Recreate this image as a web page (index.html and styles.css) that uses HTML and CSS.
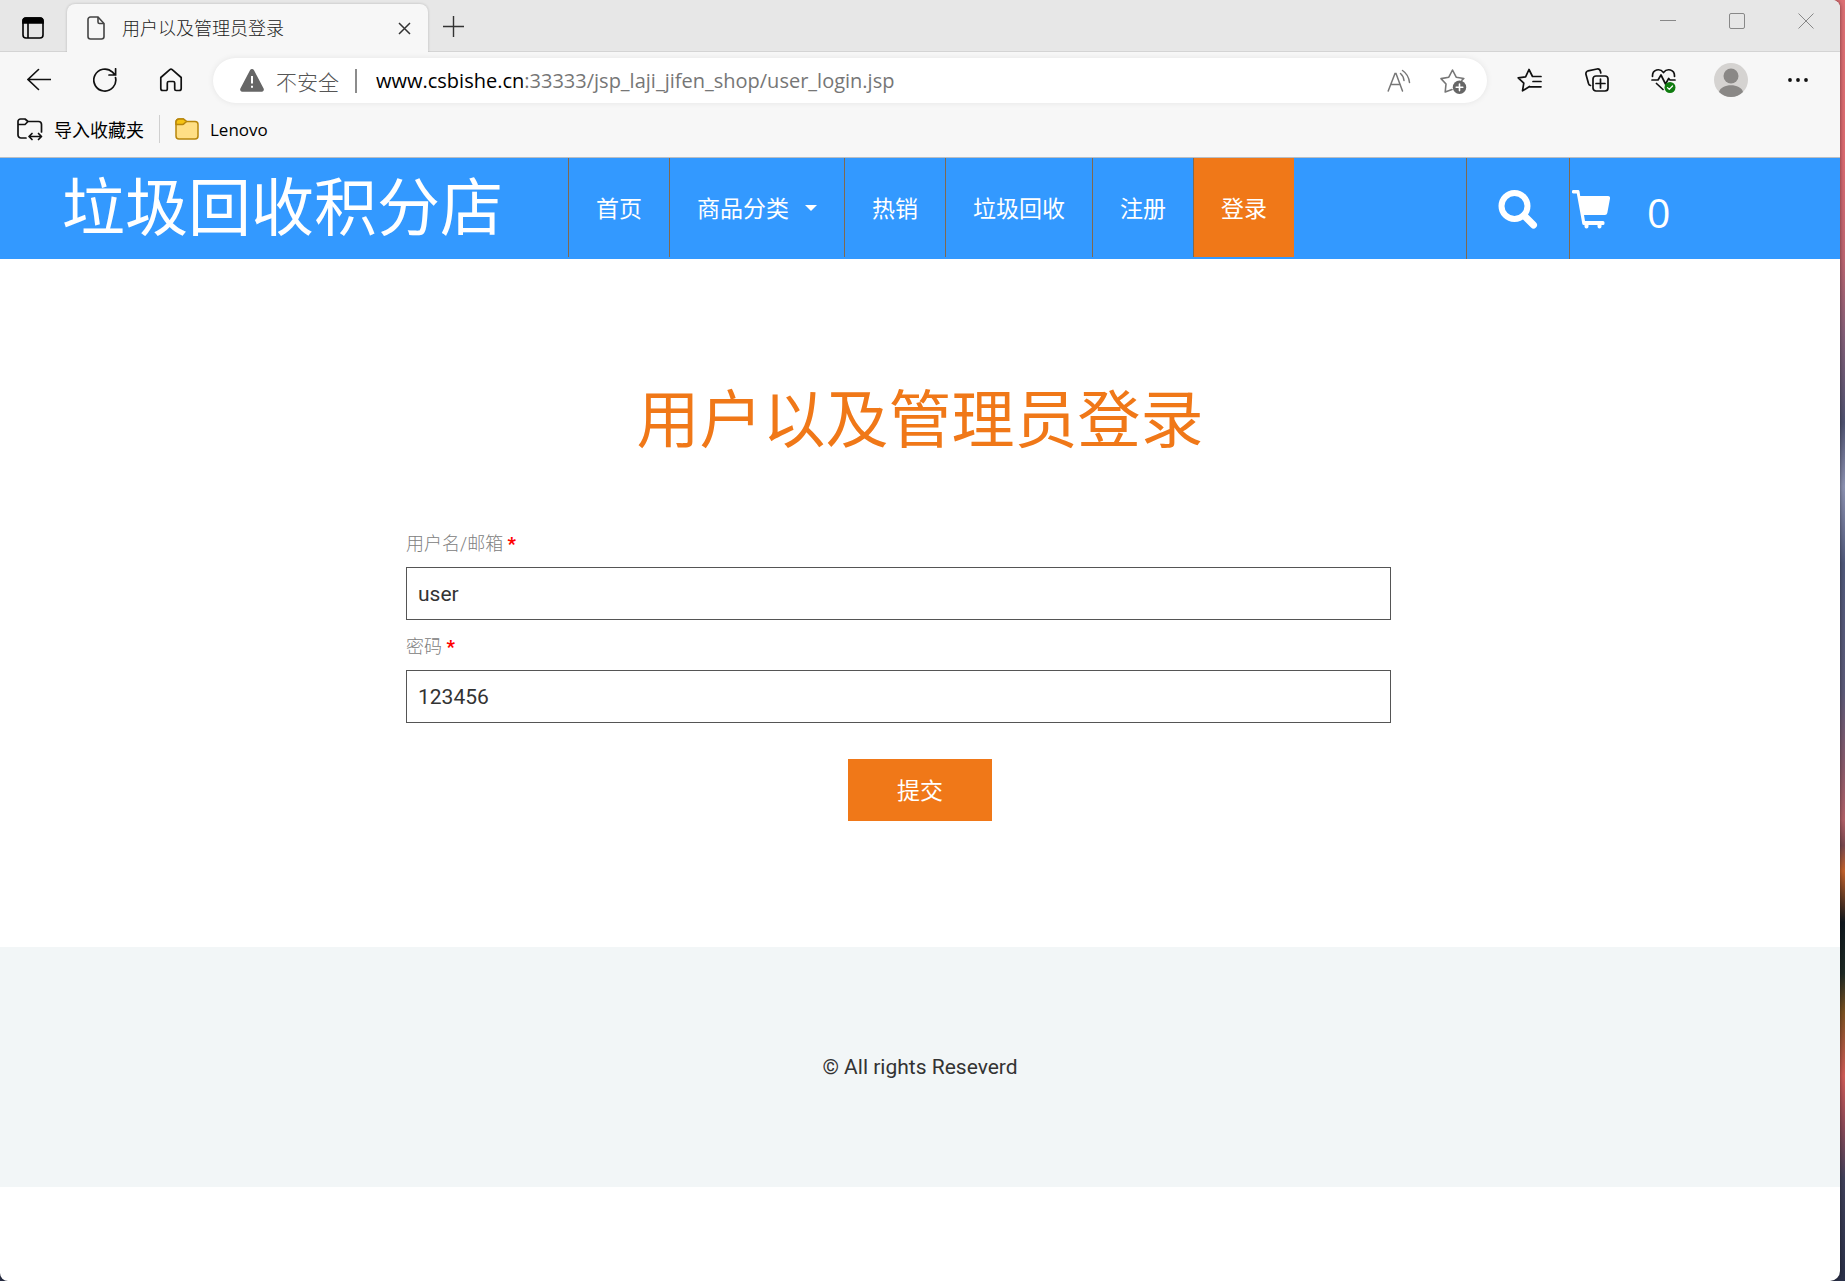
FILE: index.html
```html
<!DOCTYPE html>
<html lang="zh-CN">
<head>
    <meta charset="UTF-8">
    <meta name="viewport" content="width=device-width, initial-scale=1.0">
    <title>用户以及管理员登录</title>
    <link rel="stylesheet" href="styles.css">
</head>
<body>
<div class="window">

    <!-- Tab strip -->
    <div class="titlebar">
        <button class="tab-actions" aria-label="Tab actions">
            <svg width="22" height="22" viewBox="0 0 22 22" fill="none" stroke="#000" stroke-width="1.6">
                <rect x="1" y="1" width="20" height="20" rx="3"/>
                <path d="M1 6V4a3 3 0 0 1 3-3h14a3 3 0 0 1 3 3v2z" fill="#000"/>
                <path d="M6 6v15"/>
            </svg>
        </button>
        <div class="tab">
            <svg width="18" height="24" viewBox="0 0 18 24" fill="none" stroke="#444" stroke-width="1.6">
                <path d="M3.500 1H11l6 6.500V20.500a2.500 2.500 0 0 1-2.500 2.500h-11A2.500 2.500 0 0 1 1 20.500v-17A2.500 2.500 0 0 1 3.500 1z"/>
                <path d="M11 1v5a1.500 1.500 0 0 0 1.500 1.500H17"/>
            </svg>
            <span class="tab-title">用户以及管理员登录</span>
            <button class="tab-close" aria-label="Close tab">
                <svg width="13" height="13" viewBox="0 0 13 13" stroke="#333" stroke-width="1.5"><path d="M1 1l11 11M12 1L1 12"/></svg>
            </button>
        </div>
        <button class="new-tab" aria-label="New tab">
            <svg width="21" height="21" viewBox="0 0 21 21" stroke="#333" stroke-width="1.4"><path d="M10.500 0v21M0 10.500h21"/></svg>
        </button>
        <div class="window-controls">
            <button aria-label="Minimize">
                <svg width="16" height="16" viewBox="0 0 16 16" stroke="#888"><path d="M0 7.500h16"/></svg>
            </button>
            <button aria-label="Maximize">
                <svg width="16" height="16" viewBox="0 0 16 16" fill="none" stroke="#888"><rect x=".5" y=".5" width="15" height="15" rx="1.500"/></svg>
            </button>
            <button aria-label="Close">
                <svg width="16" height="16" viewBox="0 0 16 16" stroke="#888"><path d="M.5.5l15 15M15.500.5l-15 15"/></svg>
            </button>
        </div>
    </div>

    <!-- Toolbar -->
    <div class="toolbar">
        <div class="nav-buttons">
            <button aria-label="Back">
                <svg width="24" height="24" viewBox="0 0 24 24" fill="none" stroke="#111" stroke-width="1.6" stroke-linecap="round"><path d="M23.500 11.500H1M11.500 1.500L1 11.500l10.500 10"/></svg>
            </button>
            <button aria-label="Refresh">
                <svg width="24" height="24" viewBox="0 0 24 24" fill="none" stroke="#111" stroke-width="1.7" stroke-linecap="round"><path d="M22.500 9.500A11 11 0 1 1 19.500 4.200L22 6.800M22.600.8v6.200H16"/></svg>
            </button>
            <button aria-label="Home">
                <svg width="24" height="24" viewBox="0 0 24 24" fill="none" stroke="#111" stroke-width="1.7" stroke-linejoin="round"><path d="M1.800 9.500L10.800 1.600a1.800 1.800 0 0 1 2.400 0L22.200 9.500V20.500a2 2 0 0 1-2 2h-3a1.500 1.500 0 0 1-1.500-1.500v-6a1.500 1.500 0 0 0-1.500-1.500H9.800a1.500 1.500 0 0 0-1.500 1.500v6a1.500 1.500 0 0 1-1.500 1.500h-3a2 2 0 0 1-2-2z"/></svg>
            </button>
        </div>
        <div class="address-bar">
            <svg width="24" height="23" viewBox="0 0 24 23">
                <path d="M10 1.200a2.300 2.300 0 0 1 4 0L23.600 19.500a2.200 2.200 0 0 1-2 3.200H2.400a2.200 2.200 0 0 1-2-3.200z" fill="#666"/>
                <path d="M12 7v7.500M12 16.800v2" stroke="#fff" stroke-width="2"/>
            </svg>
            <span class="security">不安全</span>
            <span class="url"><span class="host">www.csbishe.cn</span>:33333/jsp_laji_jifen_shop/user_login.jsp</span>
            <button class="read-aloud" aria-label="Read aloud">
                <svg width="24" height="24" viewBox="0 0 24 24" fill="none" stroke="#777" stroke-width="1.5" stroke-linecap="round"><path d="M1.200 22L8 4.500h1L15.500 22M3.800 15.500h9.400M13.500 4.500q3 2.500 3.500 7M15.500 1.500q6 4 7 12"/></svg>
            </button>
            <button class="add-favorite" aria-label="Add to favorites">
                <svg width="27" height="26" viewBox="0 0 27 26" fill="none" stroke="#777" stroke-width="1.6" stroke-linejoin="round" stroke-linecap="round">
                    <path d="M12 21.500L5.200 24 6 16 1 10.600l7.800-1.400L12.500 2l3.700 7.200 7.600 1.300-2 1.800"/>
                    <circle cx="19.500" cy="19.300" r="6.700" fill="#666" stroke="none"/>
                    <path d="M19.500 16v6.600M16.200 19.300h6.600" stroke="#fff"/>
                </svg>
            </button>
        </div>
        <div class="tool-buttons">
            <button aria-label="Favorites">
                <svg width="25" height="24" viewBox="0 0 25 24" fill="none" stroke="#111" stroke-width="1.7" stroke-linejoin="round" stroke-linecap="round"><path d="M12.500 18.500L5.500 22.800 6.800 15.200 1.200 9.800l7.400-1L12 1.500 15.500 8.500H24M16 13.500h8M13 18.800h11"/></svg>
            </button>
            <button aria-label="Collections">
                <svg width="24" height="24" viewBox="0 0 24 24" fill="none" stroke="#111" stroke-width="1.7" stroke-linecap="round">
                    <path d="M5.500 17.500a3 3 0 0 1-2-2L1 6.500a3 3 0 0 1 2.100-3.700L12 1a3 3 0 0 1 3.400 2.200L15.800 5"/>
                    <rect x="8" y="8" width="15" height="15" rx="3"/>
                    <path d="M15.500 11v9M11 15.500h9"/>
                </svg>
            </button>
            <button aria-label="Browser essentials">
                <svg width="25" height="25" viewBox="0 0 25 25" fill="none" stroke="#111" stroke-width="1.7" stroke-linejoin="round" stroke-linecap="round">
                    <path d="M1.500 8.500C1.200 1 9 0 12.500 4.500 16 0 23.800 1 23.500 8.500M1 12h6l3-5 4.500 9 3.200-5.500 1.300 1.500h5M5.500 15.500L12 21.500"/>
                    <circle cx="19" cy="19.500" r="5.500" fill="#107c10" stroke="none"/>
                    <path d="M16.500 19.600l1.800 1.800 3.200-3.400" stroke="#fff" stroke-width="1.3"/>
                </svg>
            </button>
            <button aria-label="Profile">
                <svg width="34" height="34" viewBox="0 0 34 34">
                    <circle cx="17" cy="17" r="17" fill="#d5d3d1"/>
                    <circle cx="17" cy="13" r="7.500" fill="#8a8886"/>
                    <path d="M5 29c2-9 22-9 24 0a17 17 0 0 1-24 0z" fill="#8a8886"/>
                </svg>
            </button>
            <button aria-label="Settings and more">
                <svg width="20" height="4" viewBox="0 0 20 4" fill="#111"><circle cx="2" cy="2" r="1.900"/><circle cx="10" cy="2" r="1.900"/><circle cx="18" cy="2" r="1.900"/></svg>
            </button>
        </div>
    </div>

    <!-- Bookmarks -->
    <div class="bookmarks">
        <a class="bookmark" href="#">
            <svg width="26" height="24" viewBox="0 0 26 24" fill="none" stroke="#111" stroke-width="1.7" stroke-linejoin="round" stroke-linecap="round">
                <path d="M9 21H4a3 3 0 0 1-3-3V4.500A2.500 2.500 0 0 1 3.500 2H8l3 2.500h10.500a3 3 0 0 1 3 3V15M1 7.500h7L11 4.500M12.500 19.500h11.500M15 16.500l-3 3 3 3M21.500 16.500l3 3-3 3"/>
            </svg>
            导入收藏夹
        </a>
        <a class="bookmark folder" href="#">
            <svg width="24" height="22" viewBox="0 0 24 22" stroke="#b8860b" stroke-width="1.5" stroke-linejoin="round">
                <path d="M1 4a3 3 0 0 1 3-3h4.500l3 2.500H20a3 3 0 0 1 3 3V18a3 3 0 0 1-3 3H4a3 3 0 0 1-3-3z" fill="#ffdf85"/>
                <path d="M1 6.500h6.500a2 2 0 0 0 1.500-.7L11.500 3.500 8.500 1H4a3 3 0 0 0-3 3z" fill="#f5c211"/>
            </svg>
            <span>Lenovo</span>
        </a>
    </div>

    <!-- Site header -->
    <header class="site-header">
        <a class="logo" href="#">垃圾回收积分店</a>
        <nav class="menu">
            <a href="#">首页</a>
            <a href="#">商品分类<span class="caret"></span></a>
            <a href="#">热销</a>
            <a href="#">垃圾回收</a>
            <a href="#">注册</a>
            <a class="active" href="#">登录</a>
        </nav>
        <a class="search" href="#" aria-label="Search">
            <svg width="40" height="39" viewBox="0 0 40 39" fill="none" stroke="#fff">
                <circle cx="16.500" cy="16" r="13" stroke-width="6"/>
                <path d="M26 25.500l9.500 9.500" stroke-width="7" stroke-linecap="round"/>
            </svg>
        </a>
        <a class="cart" href="#">
            <svg width="39" height="39" viewBox="0 0 39 39" fill="#fff">
                <path d="M1.500 0H6a1.500 1.500 0 0 1 1.500 1.200L8.200 6H36a2 2 0 0 1 2 2.400L35.300 23a2.500 2.500 0 0 1-2.400 2H12l1 6h18a1.500 1.500 0 0 1 1.500 1.500v1A1.500 1.500 0 0 1 31 35h-1.500v1.500a2 2 0 0 1-4 0V35h-9v1.500a2 2 0 0 1-4 0V35h-.7a1.500 1.500 0 0 1-1.500-1.200L4.800 3.500H1.500a1.500 1.500 0 0 1 0-3.500z"/>
            </svg>
            <span class="cart-count">0</span>
        </a>
    </header>

    <!-- Login form -->
    <main class="login">
        <h1>用户以及管理员登录</h1>
        <form class="login-form">
            <div class="field">
                <label for="username">用户名/邮箱 <span class="required">*</span></label>
                <input type="text" id="username" name="username" value="user">
            </div>
            <div class="field">
                <label for="password">密码 <span class="required">*</span></label>
                <input type="text" id="password" name="password" value="123456">
            </div>
            <button type="submit" class="submit">提交</button>
        </form>
    </main>

    <footer class="site-footer">
        <p>© All rights Reseverd</p>
    </footer>
</div>
</body>
</html>
```
FILE: styles.css
```css
* {
    box-sizing: border-box;
    margin: 0;
    padding: 0;
}

/* Desktop wallpaper shows behind the window */
body {
    min-height: 100vh;
    padding-right: 5px;
    font-family: Roboto, "Noto Sans CJK SC", sans-serif;
    background: linear-gradient(to bottom,
        #dc7074 0, #dc6a70 12%, #bf6570 20%, #855f78 26%, #4f5270 33%,
        #8d92b2 38%, #50587a 44%, #5c5a78 54%, #8a5a6a 60%, #b26068 64%,
        #7a4a50 66%, #c4622c 68%, #10181e 72%, #1f2a25 76%, #7a5020 79%,
        #d05c58 84%, #8a4a58 88%, #40405a 92%, #2a3048 100%);
}

button {
    border: none;
    background: none;
    font-family: inherit;
    cursor: pointer;
}

a {
    color: inherit;
    text-decoration: none;
}

svg {
    display: block;
    flex-shrink: 0;
}

.window {
    display: flex;
    flex-direction: column;
    min-height: 100vh;
    overflow: hidden;
    background: #fff;
    border-radius: 0 8px 10px 8px;
    box-shadow: 0 0 4px rgba(0, 0, 0, 0.5);
}

/* Tab strip */
.titlebar {
    display: flex;
    height: 52px;
    background: #e7e7e7;
    border-bottom: 1px solid #d4d4d4;
}

.titlebar button,
.toolbar button {
    display: flex;
    justify-content: center;
    align-items: center;
}

.tab-actions {
    width: 67px;
    padding: 4px 2px 0 0;
}

.tab {
    display: flex;
    align-items: center;
    width: 361px;
    margin: 4px 0 -1px;
    padding: 0 12px 0 20px;
    background: #f7f7f7;
    border-radius: 8px 8px 0 0;
    box-shadow: 0 0 3px rgba(0, 0, 0, 0.2);
    clip-path: inset(-4px -4px 0 -4px);
}

.tab-title {
    flex: 1;
    margin-left: 17px;
    padding-bottom: 2px;
    font-family: "Noto Sans CJK SC", sans-serif;
    font-size: 18px;
    font-weight: 300;
    line-height: 24px;
    color: #222;
}

.tab-close {
    width: 24px;
    height: 24px;
}

.new-tab {
    width: 51px;
    padding-top: 2px;
}

.window-controls {
    display: flex;
    height: 42px;
    margin-left: auto;
}

.window-controls button {
    width: 69px;
}

/* Toolbar */
.toolbar {
    display: flex;
    align-items: center;
    padding: 6px 9px 5px 6px;
    background: #f7f7f7;
}

.nav-buttons,
.tool-buttons {
    display: flex;
    padding-bottom: 1px;
}

.nav-buttons button {
    width: 66px;
    height: 40px;
}

.tool-buttons button {
    width: 67px;
    height: 40px;
}

.address-bar {
    display: flex;
    flex: 1;
    align-items: center;
    height: 45px;
    margin: 0 9px;
    padding: 0 20px 0 27px;
    background: #fff;
    border-radius: 23px;
    box-shadow: 0 0 6px rgba(0, 0, 0, 0.08);
}

.security {
    margin-left: 12px;
    padding-right: 16px;
    border-right: 2px solid #8c8c8c;
    font-family: "Noto Sans CJK SC", sans-serif;
    font-size: 21px;
    font-weight: 300;
    line-height: 24px;
    color: #555;
}

.url {
    flex: 1;
    margin-left: 19px;
    font-family: "Open Sans", sans-serif;
    font-size: 20px;
    line-height: 28px;
    color: #767676;
}

.host {
    color: #000;
}

.add-favorite {
    margin-left: 29px;
}

/* Bookmarks */
.bookmarks {
    display: flex;
    align-items: center;
    padding: 7px 17px 14px;
    background: #f7f7f7;
    border-bottom: 1px solid #b9bec4;
}

.bookmark {
    display: flex;
    align-items: center;
    gap: 11px;
    height: 28px;
    font-family: "Noto Sans CJK SC", sans-serif;
    font-size: 18px;
    color: #000;
}

.folder {
    margin-left: 15px;
    padding-left: 15px;
    border-left: 1px solid #d0d0d0;
    font-family: "Open Sans", sans-serif;
    font-size: 17px;
}

/* Site header */
.site-header {
    display: flex;
    height: 101px;
    background: #3399ff;
    color: #fff;
    font-family: "Noto Sans CJK SC", sans-serif;
}

.logo {
    padding: 0 65px 0 62px;
    font-size: 63px;
    line-height: 90px;
    white-space: nowrap;
}

.menu {
    display: flex;
    margin-bottom: 2px;
}

.menu a {
    display: flex;
    align-items: center;
    padding: 0 27px 2px;
    border-left: 1px solid #80694f;
    font-size: 23px;
    white-space: nowrap;
}

.menu .active {
    background: #f07818;
}

.caret {
    margin: 3px 0 0 16px;
    border-top: 6px solid #fff;
    border-left: 6px solid transparent;
    border-right: 6px solid transparent;
}

.search {
    display: flex;
    justify-content: center;
    align-items: center;
    width: 103px;
    margin-left: auto;
    padding-top: 2px;
    border-left: 1px solid #80694f;
}

.cart {
    display: flex;
    align-items: center;
    width: 271px;
    padding: 2px 0 0 2px;
    border-left: 1px solid #80694f;
}

.cart-count {
    margin-left: 36px;
    padding-top: 4px;
    font-family: "Open Sans", sans-serif;
    font-size: 41px;
    line-height: 48px;
}

/* Login form */
.login {
    padding: 110px 20px 126px;
}

.login h1 {
    margin-bottom: 70px;
    font-family: "Noto Sans CJK SC", sans-serif;
    font-size: 63px;
    font-weight: 400;
    line-height: 92px;
    text-align: center;
    color: #f07818;
}

.login-form {
    max-width: 1028px;
    margin: 0 auto;
}

.field {
    margin: 0 43px 14px 0;
}

.field label {
    display: block;
    margin-bottom: 11px;
    font-size: 18px;
    font-weight: 300;
    line-height: 25px;
    color: #808080;
}

.required {
    font-weight: 900;
    color: #f00;
}

.field input {
    display: block;
    width: 100%;
    height: 53px;
    padding: 0 11px;
    border: 1px solid #555;
    background: #fff;
    color: #333;
    font-family: Roboto, sans-serif;
    font-size: 21px;
}

.submit {
    display: block;
    width: 144px;
    height: 62px;
    margin: 36px auto 0;
    padding-bottom: 2px;
    background: #f07818;
    color: #fff;
    font-size: 23px;
}

/* Footer */
.site-footer {
    padding: 105px 20px;
    background: #f2f6f7;
    text-align: center;
}

.site-footer p {
    color: #333;
    font-size: 21px;
    line-height: 30px;
}
```
